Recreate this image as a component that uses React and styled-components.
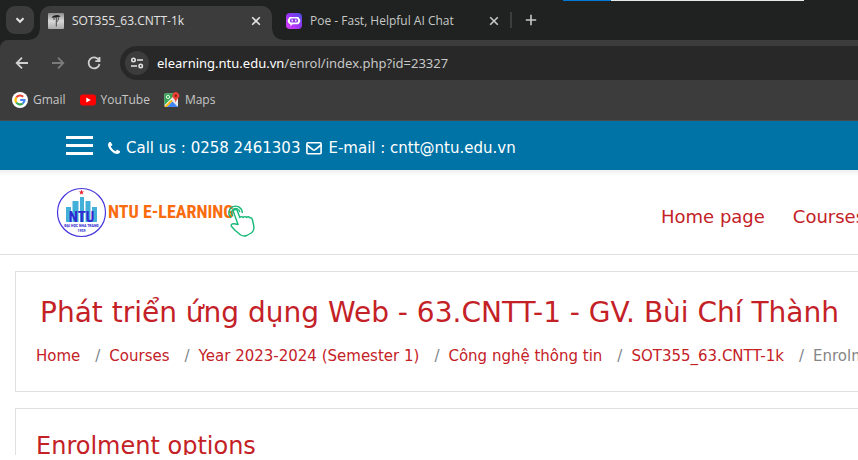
import React from "react";
import styled, { createGlobalStyle } from "styled-components";

const GlobalStyle = createGlobalStyle`
  * { box-sizing: border-box; }
  body { margin: 0; background: #fff; overflow: hidden; }
  button { border: 0; padding: 0; background: none; color: inherit; font: inherit; }
  a { color: inherit; text-decoration: none; }
  svg { display: block; flex: none; }
  h1, h2, p, ol { margin: 0; padding: 0; font-weight: 400; }
`;

const uiFont = `"Open Sans", "Noto Sans", sans-serif`;
const pageFont = `"DejaVu Sans", Verdana, sans-serif`;

const Browser = styled.div`
  display: flex;
  flex-direction: column;
  height: 100vh;
  padding-bottom: 5px;
  overflow: hidden;
`;

const TabStrip = styled.div`
  position: relative;
  display: flex;
  align-items: flex-end;
  height: 40px;
  flex: none;
  background: #202221;
  font: 12px/16px ${uiFont};
`;

const WindowEdge = styled.div`
  position: absolute;
  top: 0;
  left: 563px;
  display: flex;
  width: 241px;
  height: 1px;
  background: #e6e9e6;
  &::before { content: ""; width: 48px; background: #0078d7; }
`;

const TabSearch = styled.button`
  display: grid;
  place-items: center;
  width: 28px;
  height: 28px;
  margin: 0 6px 6px;
  border-radius: 9px;
  background: #3c3c3c;
  color: #e3e3e3;
`;

const Tab = styled.div`
  position: relative;
  display: flex;
  align-items: center;
  gap: 8px;
  width: ${(p) => (p.$active ? 232 : 238)}px;
  height: 34px;
  padding: 0 8px 4px ${(p) => (p.$active ? 8 : 14)}px;
  border-radius: 10px 10px 0 0;
  background: ${(p) => (p.$active ? "#3c3c3c" : "transparent")};
  color: ${(p) => (p.$active ? "#e3e3e3" : "#c7c8c7")};
  &::before, &::after {
    content: "";
    display: ${(p) => (p.$active ? "block" : "none")};
    position: absolute;
    bottom: 0;
    width: 10px;
    height: 10px;
  }
  &::before { right: 100%; background: radial-gradient(circle at 0 0, transparent 9px, #3c3c3c 10px); }
  &::after { left: 100%; background: radial-gradient(circle at 100% 0, transparent 9px, #3c3c3c 10px); }
`;

const TabTitle = styled.span`
  flex: 1;
  white-space: nowrap;
`;

const TabClose = styled.button`
  display: grid;
  place-items: center;
  width: 16px;
  height: 16px;
`;

const NewTab = styled.button`
  display: grid;
  place-items: center;
  width: 40px;
  height: 16px;
  margin-bottom: 12px;
  border-left: 2px solid #3c3e3d;
  color: #c7c8c7;
`;

const ToolbarBack = styled.div`
  flex: none;
  background: #202221;
`;

const Toolbar = styled.div`
  display: flex;
  align-items: center;
  height: 46px;
  padding-left: 14px;
  border-top-left-radius: 8px;
  background: #3c3c3c;
`;

const NavButton = styled.button`
  display: grid;
  place-items: center;
  width: 16px;
  height: 16px;
  margin-right: 20px;
  color: ${(p) => (p.disabled ? "#7b7b7b" : "#d0d0d0")};
`;

const Omnibox = styled.div`
  display: flex;
  align-items: center;
  gap: 8px;
  flex: 1;
  height: 34px;
  margin-left: -2px;
  padding-left: 5px;
  border-radius: 17px 0 0 17px;
  background: #282828;
  color: #c7c7c7;
  font: 13px/20px "Noto Sans", sans-serif;
`;

const SiteInfo = styled.button`
  display: grid;
  place-items: center;
  width: 24px;
  height: 24px;
  border-radius: 50%;
  background: #3c3c3c;
  color: #e3e3e3;
`;

const Address = styled.a`
  strong { color: #fff; font-weight: 400; }
`;

const Bookmarks = styled.nav`
  display: flex;
  align-items: center;
  gap: 14px;
  height: 35px;
  flex: none;
  padding: 0 12px 7px;
  border-bottom: 1px solid #4a4a4a;
  background: #3c3c3c;
  color: #c7c7c7;
  font: 12px/16px ${uiFont};
`;

const Bookmark = styled.a`
  display: flex;
  align-items: center;
  gap: 5px;
`;

const Page = styled.div`
  flex: 1;
  min-height: 0;
  overflow: hidden;
  background: #fff;
  color: #c42127;
  font: 15px/24px ${pageFont};
`;

const ContactBar = styled.div`
  display: flex;
  align-items: center;
  gap: 15px;
  height: 49px;
  padding-left: 66px;
  background: #0073a6;
  color: #fff;
`;

const MenuButton = styled.button`
  display: flex;
  flex-direction: column;
  gap: 5px;
  width: 27px;
  span { height: 3px; background: #fff; }
`;

const ContactText = styled.p`
  display: flex;
  align-items: center;
  gap: 6px;
  padding-top: 4px;
  white-space: nowrap;
`;

const SiteHeader = styled.header`
  display: flex;
  align-items: center;
  justify-content: space-between;
  height: 85px;
  padding: 2px 0 0 56px;
  border-bottom: 1px solid #e2e0e2;
  background: linear-gradient(#efeff1, #fff 6px);
`;

const Logo = styled.a`
  display: flex;
  text { font-family: "Roboto Condensed", "Liberation Sans Narrow", Roboto, sans-serif; font-weight: 700; }
`;

const MainNav = styled.nav`
  display: flex;
  gap: 28px;
  width: 197px;
  padding-top: 7px;
  font-size: 18px;
  white-space: nowrap;
`;

const Card = styled.section`
  margin: 16px 0 0 15px;
  padding: 21px 0 12px 20px;
  border: 1px solid #dee0e2;
  border-right: 0;
  white-space: nowrap;
`;

const CourseTitle = styled.h1`
  padding-left: 4px;
  font-size: 28px;
  line-height: 40px;
`;

const Crumbs = styled.ol`
  display: flex;
  list-style: none;
  padding: 11px 0;
  line-height: 24px;
`;

const Crumb = styled.li`
  color: #868686;
  a { color: #c42127; }
  & + &::before { content: "/"; padding: 0 9px 0 15px; color: #7c858d; }
`;

const SectionTitle = styled.h2`
  font-size: 24px;
  line-height: 32px;
`;

const Stroke = ({ size = 16, width = 2, children }) => (
  <svg width={size} height={size} viewBox="0 0 16 16" fill="none" stroke="currentColor" strokeWidth={width}>
    {children}
  </svg>
);

const CloseIcon = () => (
  <Stroke width={1.6}><path d="M4.2 4.2l7.6 7.6M11.8 4.2l-7.6 7.6" /></Stroke>
);

const MoodleFavicon = () => (
  <svg width="16" height="16" viewBox="0 0 16 16">
    <defs>
      <linearGradient id="grey" x1="0" x2="0" y1="0" y2="1">
        <stop offset="0" stopColor="#8c8c8c" /><stop offset=".5" stopColor="#d8d8d8" /><stop offset="1" stopColor="#aaa" />
      </linearGradient>
    </defs>
    <rect width="16" height="16" rx="1" fill="url(#grey)" />
    <path d="M3.5 4.8Q5 2 9 2Q12 2 12.500 3.500L9 4.500Z" fill="#222" />
    <path d="M8.300 4.500v9M10.500 4.500l-.5 3-1.500 1.500M6 5v2" fill="none" stroke="#444" strokeWidth="1" />
  </svg>
);

const PoeFavicon = () => (
  <svg width="16" height="16" viewBox="0 0 16 16">
    <defs>
      <linearGradient id="poe" x1="0" x2="1" y1="1" y2="0">
        <stop offset="0" stopColor="#e23bff" /><stop offset=".5" stopColor="#9a35f5" /><stop offset="1" stopColor="#4a4ee0" />
      </linearGradient>
    </defs>
    <rect width="16" height="16" rx="4" fill="url(#poe)" />
    <path d="M4 4h8q1 0 1 1.200 1.300.3 1.300 2.500t-1.300 2.500q0 1-1 1H6.500l-2 2v-2Q3 11.200 3 10.200 1.700 9.800 1.700 7.700T3 5.200Q3 4 4 4Z" fill="#fff" />
    <rect x="4" y="5.600" width="8" height="4" rx="1.500" fill="#8a35e8" />
    <path d="M6.200 6.600v2M9.800 6.600v2" stroke="#fff" strokeWidth="1.300" />
  </svg>
);

const GoogleIcon = () => (
  <svg width="16" height="16" viewBox="0 0 16 16" fill="none" strokeWidth="2.2">
    <circle cx="8" cy="8" r="8" fill="#fff" />
    <path d="M4.300 5.500A4.500 4.500 0 0 1 11.200 4.800" stroke="#ea4335" />
    <path d="M4.300 5.500a4.500 4.500 0 0 0 0 5" stroke="#fbbc05" />
    <path d="M4.300 10.500a4.500 4.500 0 0 0 6.500 1" stroke="#34a853" />
    <path d="M10.800 11.500A4.500 4.500 0 0 0 12.500 8H8.200" stroke="#4285f4" />
  </svg>
);

const YouTubeIcon = () => (
  <svg width="16" height="16" viewBox="0 0 16 16">
    <rect y="2.400" width="16" height="11.200" rx="3" fill="#f00" />
    <path d="M6.300 5.500v5l4.400-2.500z" fill="#fff" />
  </svg>
);

const MapsIcon = () => (
  <svg width="16" height="16" viewBox="0 0 16 16">
    <rect x=".5" y="1.500" width="13.500" height="13.500" rx="1" fill="#e8eaed" />
    <path d="M.5 1.500H12L.5 13Z" fill="#34a853" />
    <path d="M.5 14.500L7.300 7.700l1.500 1.500L3 15Z" fill="#fbbc05" />
    <path d="M3 15l5.500-5.500L14 15Z" fill="#4285f4" />
    <circle cx="4" cy="5" r="1.600" fill="none" stroke="#fff" strokeWidth=".9" />
    <path d="M11.700 10.500Q11.500 8 9.300 6A3.400 3.400 0 1 1 14.300 6Q12 8 11.700 10.500Z" fill="#ea4335" />
    <circle cx="11.800" cy="3.800" r="1.200" fill="#8c1d15" />
  </svg>
);

const PhoneIcon = () => (
  <svg width="12" height="12" viewBox="0 0 1408 1408" fill="currentColor">
    <path d="M1408 1112q0 27-10 70.500t-21 68.500q-21 50-122 106-94 51-186 51-27 0-53-3.500t-57.500-12.500-47-14.500-55.500-20.500-49-18q-98-35-175-83-127-79-264-216T152 776q-48-77-83-175-3-9-18-49t-20.500-55.500T16 449.500 3.500 392 0 339q0-92 51-186Q107 52 157 31q25-11 68.500-21T296 0q14 0 21 3 18 6 53 76 11 19 30 54t35 63.500 31 53.500q3 4 17.500 25t21.500 35.500 7 28.500q0 20-28.500 50t-62 55-62 53-28.500 46q0 9 5 22.500t8.500 20.500 14 24 11.500 19q76 137 174 235t235 174q2 1 19 11.500t24 14 20.500 8.500 22.500 5q18 0 46-28.500t53-62 55-62 50-28.500q14 0 28.500 7t35.500 21.500 25 17.500q25 15 53.500 31t63.500 35 54 30q70 35 76 53 3 7 3 21z" />
  </svg>
);

const MailIcon = () => (
  <Stroke width={1.6}>
    <rect x=".9" y="2.800" width="14.200" height="11" rx="1" />
    <path d="M1 5l5.800 4.600q1.200.9 2.400 0L15 5" />
  </Stroke>
);

const LogoArt = () => (
  <svg width="204" height="54" viewBox="0 0 204 54" role="img" aria-label="NTU E-Learning">
    <circle cx="25.500" cy="26.500" r="24" fill="#fff" stroke="#4433dc" strokeWidth="1.200" />
    <path d="M10 21h5v15h-5zM16.500 15h6v21h-6zM24 11h4v25h-4zM29.500 15h5v21h-5zM36 21h5v15h-5z" fill="#43b0da" />
    <path d="M25.500 3.500l.7 2h2l-1.600 1.200.6 2-1.700-1.200-1.700 1.200.6-2-1.600-1.200h2z" fill="#e8212d" />
    <text x="25.500" y="36" fontSize="15" textAnchor="middle" fill="#3028d0">NTU</text>
    <text x="25.500" y="41" fontSize="4" textAnchor="middle" fill="#3028d0">ĐẠI HỌC NHA TRANG</text>
    <text x="25.500" y="46" fontSize="4" textAnchor="middle" fill="#3028d0">1959</text>
    <text x="52" y="32" fontSize="18" fill="#f96c0e">NTU E-LEARNING</text>
    <g fill="none" stroke="#17b978" strokeWidth="1.400" strokeLinejoin="round" strokeLinecap="round">
      <path d="M182 38.500l-4.500-12.500a2 2 0 0 1 3.800-1.200l2.500 6.700q1.500-1.800 3.300 0 1.700-1.800 3.400 0 1.700-1.700 3.300.2 2.200-.4 2.700 2.300l1.200 5.500q1 5-2.500 7.500l-4.500 2.500q-3 1.200-6-.5l-6-5-3.500-4q-.5-2.500 3-2.200z" />
      <path d="M176.500 29.500a4.200 4.200 0 1 1 7.200-4" />
      <path d="M174.800 31.500a6.700 6.700 0 1 1 11.500-5" />
    </g>
  </svg>
);

const crumbs = ["Home", "Courses", "Year 2023-2024 (Semester 1)", "Công nghệ thông tin", "SOT355_63.CNTT-1k"];

export default function App() {
  return (
    <Browser>
      <GlobalStyle />
      <TabStrip>
        <WindowEdge />
        <TabSearch aria-label="Search tabs">
          <Stroke><path d="M4.500 6.300L8 9.800l3.500-3.500" /></Stroke>
        </TabSearch>
        <Tab $active>
          <MoodleFavicon />
          <TabTitle>SOT355_63.CNTT-1k</TabTitle>
          <TabClose aria-label="Close tab"><CloseIcon /></TabClose>
        </Tab>
        <Tab>
          <PoeFavicon />
          <TabTitle>Poe - Fast, Helpful AI Chat</TabTitle>
          <TabClose aria-label="Close tab"><CloseIcon /></TabClose>
        </Tab>
        <NewTab aria-label="New tab">
          <Stroke width={1.6}><path d="M8 2.800v10.400M2.800 8h10.400" /></Stroke>
        </NewTab>
      </TabStrip>
      <ToolbarBack>
        <Toolbar>
          <NavButton aria-label="Back"><Stroke width={1.8}><path d="M14 8H3M8 2.700L2.700 8 8 13.300" /></Stroke></NavButton>
          <NavButton aria-label="Forward" disabled><Stroke width={1.8}><path d="M2 8h11M8 2.700L13.300 8 8 13.300" /></Stroke></NavButton>
          <NavButton aria-label="Reload">
            <Stroke width={1.8}><path d="M12.800 5A5.500 5.500 0 1 0 13.500 9M13.500 2v4.200H9.300" /></Stroke>
          </NavButton>
          <Omnibox>
            <SiteInfo aria-label="View site information">
              <Stroke width={1.6}>
                <circle cx="4.500" cy="5" r="1.700" /><path d="M8 5h6M2 11h6" /><circle cx="11.700" cy="11" r="1.700" />
              </Stroke>
            </SiteInfo>
            <Address href="#"><strong>elearning.ntu.edu.vn</strong>/enrol/index.php?id=23327</Address>
          </Omnibox>
        </Toolbar>
      </ToolbarBack>
      <Bookmarks>
        <Bookmark href="#"><GoogleIcon />Gmail</Bookmark>
        <Bookmark href="#"><YouTubeIcon />YouTube</Bookmark>
        <Bookmark href="#"><MapsIcon />Maps</Bookmark>
      </Bookmarks>
      <Page>
        <ContactBar>
          <MenuButton aria-label="Menu"><span /><span /><span /></MenuButton>
          <ContactText>
            <PhoneIcon />
            <span>Call us : 0258 2461303</span>
            <MailIcon />
            <span>E-mail : <a href="mailto:cntt@ntu.edu.vn">cntt@ntu.edu.vn</a></span>
          </ContactText>
        </ContactBar>
        <SiteHeader>
          <Logo href="#"><LogoArt /></Logo>
          <MainNav>
            <a href="#">Home page</a>
            <a href="#">Courses</a>
          </MainNav>
        </SiteHeader>
        <Card>
          <CourseTitle>Phát triển ứng dụng Web - 63.CNTT-1 - GV. Bùi Chí Thành</CourseTitle>
          <Crumbs>
            {crumbs.map((name) => <Crumb key={name}><a href="#">{name}</a></Crumb>)}
            <Crumb>Enrolment options</Crumb>
          </Crumbs>
        </Card>
        <Card>
          <SectionTitle>Enrolment options</SectionTitle>
        </Card>
      </Page>
    </Browser>
  );
}
